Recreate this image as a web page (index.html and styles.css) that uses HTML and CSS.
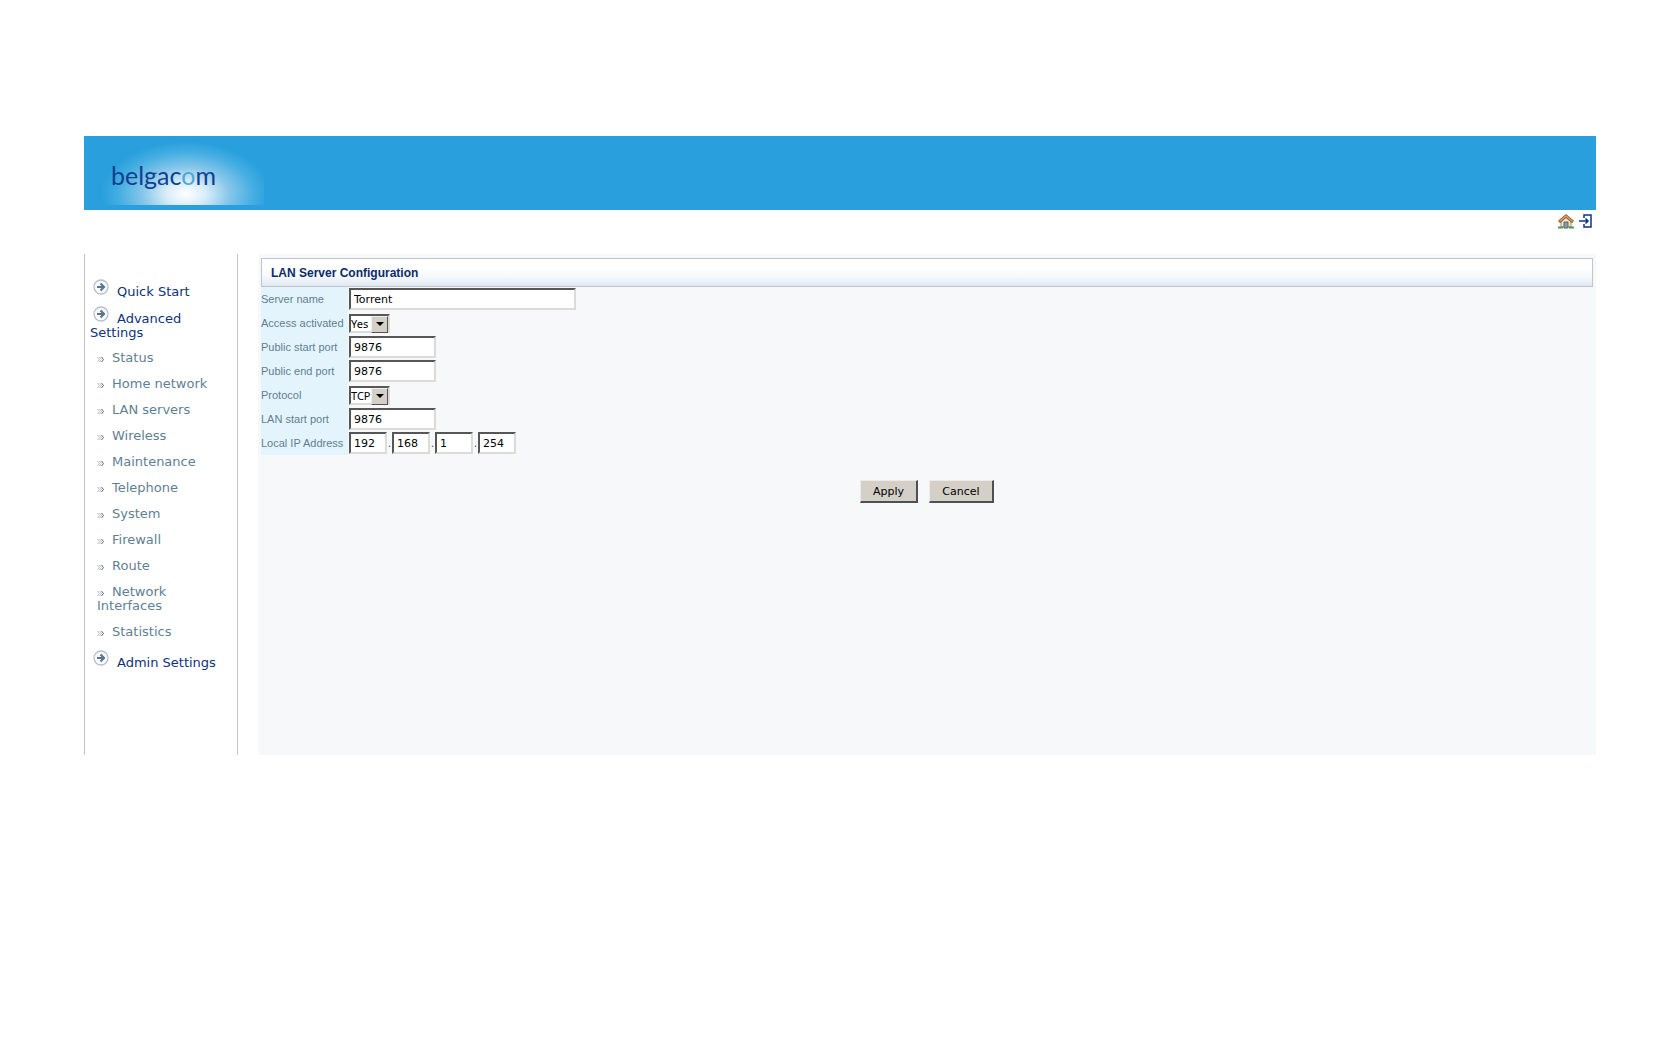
FILE: index.html
```html
<!DOCTYPE html>
<html lang="en">
<head>
<meta charset="utf-8">
<title>LAN Server Configuration</title>
<link rel="stylesheet" href="styles.css">
</head>
<body>
<svg class="defs" aria-hidden="true">
  <symbol id="go" viewBox="0 0 16 16">
    <circle cx="8" cy="8" r="7" fill="#fbfcfe" stroke="#b4bfce" stroke-width="1.3"/>
    <path d="M4 8H11M7.5 4.5L11 8L7.5 11.5" fill="none" stroke="#5b7590" stroke-width="2.2"/>
  </symbol>
  <symbol id="chev" viewBox="0 0 8 7">
    <path d="M0.5 1L2.500 3.5L0.5 6M2.5 1L4.500 3.5L2.5 6" fill="none" stroke="#b9bdc0"/>
    <path d="M4.500 1L6.5 3.5L4.500 6" fill="none" stroke="#606a70"/>
  </symbol>
</svg>
<div class="page">
  <header class="banner"><div class="brand"><span class="logo">belgac<span class="logo-o">o</span>m</span></div></header>
  <div class="tools">
    <a href="#" aria-label="Home"><svg width="16" height="15" viewBox="0 0 16 15">
      <path d="M3 7L8 3L13 7V13H3Z" fill="#f3e7cf" stroke="#a9876b"/>
      <path d="M1 8L8 2L15 8" fill="none" stroke="#8a5a34" stroke-width="3"/>
      <path d="M1.500 7.500L8 2L14.500 7.500" fill="none" stroke="#dfa059" stroke-width="1.600"/>
      <path d="M6 8H10V14H6Z" fill="#8c9a9c" stroke="#59676a"/>
      <path d="M0 13.500H5M11 13.500H16" stroke="#4f9a50" stroke-width="2"/>
    </svg></a>
    <a href="#" aria-label="Log out"><svg width="13" height="14" viewBox="0 0 13 14">
      <path d="M5 4V1H12V13H5V10M0 7H9M6.500 4.500L9 7L6.500 9.500" fill="none" stroke="#0b3484" stroke-width="1.500"/>
    </svg></a>
  </div>
  <div class="columns">
    <nav class="side">
      <a class="top" href="#"><svg class="go"><use href="#go"/></svg>Quick Start</a>
      <a class="top" href="#"><svg class="go"><use href="#go"/></svg>Advanced Settings</a>
      <div class="subs">
        <a href="#"><svg class="chev"><use href="#chev"/></svg>Status</a>
        <a href="#"><svg class="chev"><use href="#chev"/></svg>Home network</a>
        <a href="#"><svg class="chev"><use href="#chev"/></svg>LAN servers</a>
        <a href="#"><svg class="chev"><use href="#chev"/></svg>Wireless</a>
        <a href="#"><svg class="chev"><use href="#chev"/></svg>Maintenance</a>
        <a href="#"><svg class="chev"><use href="#chev"/></svg>Telephone</a>
        <a href="#"><svg class="chev"><use href="#chev"/></svg>System</a>
        <a href="#"><svg class="chev"><use href="#chev"/></svg>Firewall</a>
        <a href="#"><svg class="chev"><use href="#chev"/></svg>Route</a>
        <a href="#"><svg class="chev"><use href="#chev"/></svg>Network<br>Interfaces</a>
        <a href="#"><svg class="chev"><use href="#chev"/></svg>Statistics</a>
      </div>
      <a class="top" href="#"><svg class="go"><use href="#go"/></svg>Admin Settings</a>
    </nav>
    <main class="main">
      <h1 class="title">LAN Server Configuration</h1>
      <form>
        <div class="row"><label for="name">Server name</label><input id="name" class="wide" type="text" value="Torrent"></div>
        <div class="row"><label for="active">Access activated</label><span class="pick"><select id="active"><option>Yes</option><option>No</option></select></span></div>
        <div class="row"><label for="start">Public start port</label><input id="start" type="text" value="9876"></div>
        <div class="row"><label for="end">Public end port</label><input id="end" type="text" value="9876"></div>
        <div class="row"><label for="proto">Protocol</label><span class="pick"><select id="proto"><option>TCP</option><option>UDP</option></select></span></div>
        <div class="row"><label for="lan">LAN start port</label><input id="lan" type="text" value="9876"></div>
        <div class="row"><label for="ip1">Local IP Address</label><input id="ip1" class="octet" type="text" value="192"><span class="dot">.</span><input aria-label="Second octet" class="octet" type="text" value="168"><span class="dot">.</span><input aria-label="Third octet" class="octet" type="text" value="1"><span class="dot">.</span><input aria-label="Fourth octet" class="octet" type="text" value="254"></div>
        <div class="actions"><button type="button" class="apply">Apply</button><button type="button" class="cancel">Cancel</button></div>
      </form>
    </main>
  </div>
</div>
</body>
</html>
```
FILE: styles.css
```css
* { box-sizing: border-box; }
body { margin: 0; background: #fff; font-family: "DejaVu Sans", Verdana, sans-serif; }
.defs { display: none; }
.page { margin: 136px 5% 0; }

.banner { height: 74px; background: #29a0dd; }
.brand {
  width: 180px; height: 69px; padding: 22px 0 0 27px;
  background: radial-gradient(ellipse 84px 52px at 102px 58px, #fff 0%, #d8ecf8 24%, #86c6ea 52%, #45aee2 80%, #29a0dd 100%);
}
.logo { font: 25px/34px Lato, sans-serif; color: #12408f; }
.logo-o { color: #4fa9d3; }

.tools { display: flex; justify-content: flex-end; gap: 5px; height: 44px; padding: 4px 4px 0 0; }
.tools svg { display: block; }

.columns { display: flex; gap: 20px; min-height: 501px; }
.side {
  flex: 0 0 154px; padding: 25px 20px 0 5px;
  border: solid #c4c4c4; border-width: 0 1px;
  font-size: 13px; line-height: 14px;
}
.side a { display: block; text-decoration: none; color: #5f7f93; padding: 6px 0; }
.side .top { color: #0e3278; padding: 0 0 7px; }
.go { width: 16px; height: 16px; margin: 0 8px 0 3px; vertical-align: 1px; }
.subs { margin-top: -2px; padding: 0 0 5px 7px; }
.chev { width: 8px; height: 7px; margin-right: 7px; vertical-align: -1px; }

.main { flex: 1; min-width: 0; background: #f7f8fa; padding: 4px 3px 0; }
.title {
  margin: 0; height: 29px; padding: 1px 9px 0;
  border: 1px solid #c0c5cd; background: linear-gradient(#fff 30%, #f6f9fc 65%, #e0e9f1);
  font: bold 12px/27px "Liberation Sans", Arial, sans-serif; color: #0a2c6a;
}
.row { display: flex; align-items: center; height: 24px; }
.row label {
  flex: 0 0 87px; height: 24px; margin-right: 1px; background: #e4f4fd;
  font: 11px/24px "Liberation Sans", Arial, sans-serif; color: #5f7f93; white-space: nowrap;
}
.row input, .pick {
  border: 2px solid; border-color: #565656 #dddbd6 #dddbd6 #565656; background: #fff;
}
.row input { width: 87px; height: 22px; margin: 0; padding: 1px 3px 0; font: 11px "DejaVu Sans", Verdana, sans-serif; color: #000; }
.row .wide { width: 227px; }
.row .octet { width: 38px; }
.dot { width: 5px; text-align: center; font-size: 11px; color: #44545f; }
.pick { position: relative; width: 41px; height: 19px; }
.pick select {
  appearance: none; display: block; width: 37px; height: 15px; margin: 0; padding: 0; border: 0; background: none;
  font: 11px/15px "Noto Sans", Tahoma, sans-serif; color: #000;
}
.pick::before {
  content: ""; position: absolute; right: 0; top: 0; width: 15px; height: 15px;
  background: #d4d0c8; border: 1px solid; border-color: #f0eeea #555 #555 #f0eeea;
}
.pick::after {
  content: ""; position: absolute; right: 4px; top: 6px;
  border: 4px solid transparent; border-top-color: #000; border-bottom: 0;
}
.actions { display: flex; justify-content: center; gap: 11px; padding: 25px 0; }
.actions button {
  width: 58px; height: 23px; padding: 1px 0 0;
  border: solid; border-width: 1px 2px 2px 1px; border-color: #ecebe7 #505050 #505050 #ecebe7;
  background: #d4d0c8; font: 11px "DejaVu Sans", Verdana, sans-serif; color: #000;
}
.actions .cancel { width: 65px; }
```
